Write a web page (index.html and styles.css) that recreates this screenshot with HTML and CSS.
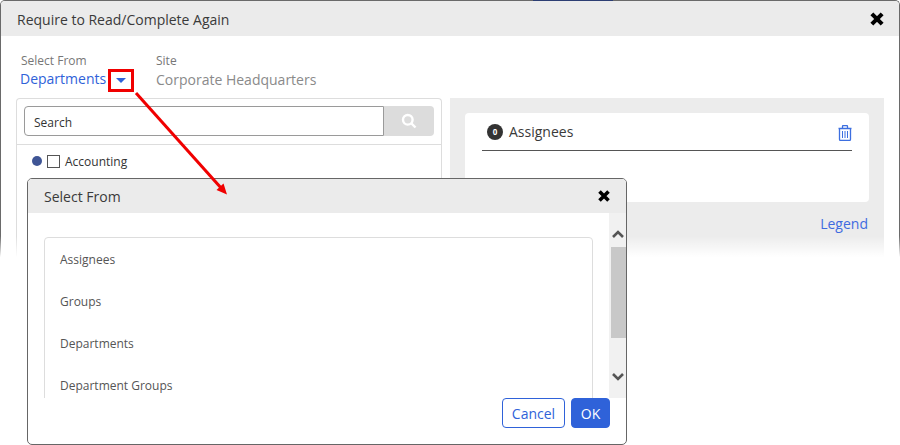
FILE: index.html
```html
<!DOCTYPE html>
<html lang="en">
<head>
<meta charset="utf-8">
<title>Require to Read/Complete Again</title>
<link rel="stylesheet" href="styles.css">
</head>
<body>
<div class="window">
  <div class="sliver"></div>
  <header class="head">
    <span class="title">Require to Read/Complete Again</span>
    <svg class="close" viewBox="0 0 14 14"><path d="M2.5 2.5l9 9M11.5 2.5l-9 9"/></svg>
  </header>
  <div class="filters">
    <div class="filter filter-from">
      <span class="label">Select From</span>
      <span class="value-row"><span class="link">Departments</span><span class="caret"></span></span>
    </div>
    <div class="filter">
      <span class="label">Site</span>
      <span class="value">Corporate Headquarters</span>
    </div>
  </div>
  <div class="panels">
    <section class="left">
      <div class="search">
        <div class="search-input">Search</div>
        <div class="search-btn">
          <svg viewBox="0 0 16 16" class="mag"><circle cx="6.8" cy="6.8" r="4.8"/><path d="M10.5 10.5l4 4"/></svg>
        </div>
      </div>
      <div class="row">
        <span class="dot"></span><span class="check"></span><span class="row-text">Accounting</span>
      </div>
    </section>
    <section class="right">
      <div class="card">
        <div class="card-head">
          <span class="badge">0</span>
          <span class="card-title">Assignees</span>
          <svg class="trash" viewBox="0 0 14 16"><path class="t1" d="M0.5 3.500h13M1.500 4v10.200q0 1.300 1.300 1.300h8.400q1.300 0 1.300-1.300V4M4.500 3V1.500q0-1 1-1h3q1 0 1 1V3"/><path class="t2" d="M4.500 6v7M7 6v7M9.500 6v7"/></svg>
        </div>
      </div>
      <div class="legend">Legend</div>
    </section>
  </div>
  <div class="fade"></div>
</div>

<div class="dialog">
  <header class="dialog-head">
    <span class="dialog-title">Select From</span>
    <svg class="close-small" viewBox="0 0 14 14"><path d="M2.5 2.5l9 9M11.5 2.5l-9 9"/></svg>
  </header>
  <div class="dialog-main">
    <div class="dialog-scroll">
      <ul class="list">
        <li>Assignees</li>
        <li>Groups</li>
        <li>Departments</li>
        <li>Department Groups</li>
      </ul>
    </div>
    <div class="scrollbar">
      <svg class="chev" viewBox="0 0 14 10"><path d="M2 8l5-5 5 5"/></svg>
      <div class="thumb"></div>
      <svg class="chev chev-down" viewBox="0 0 14 10"><path d="M2 2l5 5 5-5"/></svg>
    </div>
  </div>
  <footer class="dialog-foot">
    <button class="btn btn-ghost">Cancel</button>
    <button class="btn btn-solid">OK</button>
  </footer>
</div>

<div class="callout-box"></div>
<svg class="callout-arrow" viewBox="0 0 900 445">
  <path class="shaft" d="M136 93L222 189"/>
  <path class="head-tip" d="M227 194.500L216.500 190L223.500 183.500Z"/>
</svg>
</body>
</html>
```

FILE: styles.css
```css
* { box-sizing: border-box; }
html, body { margin: 0; padding: 0; background: #fff; }
body {
  width: 900px;
  height: 445px;
  position: relative;
  overflow: hidden;
  font-family: "Open Sans", "Liberation Sans", sans-serif;
  color: #333;
}

/* outer window */
.window {
  position: relative;
  height: 260px;
  width: 900px;
  border: 1px solid #6a6a6a;
  border-bottom: 0;
  border-radius: 5px 5px 0 0;
  background: #fff;
}
.sliver {
  position: absolute;
  top: -1px;
  left: 532px;
  width: 80px;
  height: 1px;
  background: #2c3e73;
}
.head {
  height: 35px;
  background: #ebebeb;
  border-radius: 4px 4px 0 0;
  display: flex;
  align-items: center;
  justify-content: space-between;
  padding: 0 14px 0 16px;
}
.title { font-size: 14px; color: #3a3a3a; margin-top: 2px; }
.close { width: 16px; height: 16px; margin-top: 1px; }
.close path, .close-small path {
  fill: none;
  stroke: #000;
  stroke-width: 3.6;
}
.filters {
  display: flex;
  padding: 16px 0 0 20px;
  height: 62px;
}
.filter { display: flex; flex-direction: column; }
.filter-from { width: 135px; }
.label { font-size: 12px; line-height: 17px; color: #777; }
.value-row { display: flex; align-items: center; }
.link { font-size: 14px; line-height: 20px; color: #2f62d9; margin-left: -1px; }
.caret {
  margin: 2px 0 0 10px;
  width: 0;
  height: 0;
  border-left: 5px solid transparent;
  border-right: 5px solid transparent;
  border-top: 5px solid #2f62d9;
}
.value { font-size: 14px; line-height: 20px; color: #8a8a8a; margin-top: 1px; }

.panels {
  display: flex;
  padding-left: 15px;
  gap: 8px;
  height: 162px;
}
.left {
  width: 426px;
  border: 1px solid #ddd;
  border-bottom: 0;
  border-radius: 4px 4px 0 0;
  padding-top: 7px;
}
.search {
  display: flex;
  margin: 0 7px;
  height: 30px;
}
.search-input {
  width: 360px;
  border: 1px solid #9a9a9a;
  border-radius: 4px 0 0 4px;
  font-size: 12px;
  line-height: 26px;
  padding: 2px 0 0 9px;
  color: #333;
}
.search-input { line-height: 28px; }
.search-btn {
  flex: 1;
  background: #dcdcdc;
  border-radius: 0 4px 4px 0;
  display: flex;
  align-items: center;
  justify-content: center;
}
.mag { width: 16px; height: 16px; fill: none; stroke: #fff; stroke-width: 2.4; }
.row {
  margin-top: 8px;
  border-top: 1px solid #ddd;
  display: flex;
  align-items: center;
  padding: 8px 0 0 15px;
}
.dot {
  width: 10px;
  height: 10px;
  border-radius: 50%;
  background: #3f5595;
  margin-top: -2px;
}
.check {
  width: 13px;
  height: 13px;
  border: 1px solid #555;
  margin: -1px 0 0 5px;
}
.row-text { font-size: 12px; margin-left: 5px; color: #333; line-height: 17px; }

.right {
  width: 434px;
  background: #ececec;
  padding: 15px 15px 0;
}
.card {
  height: 89px;
  background: #fff;
  border-radius: 4px;
  padding: 0 17px;
}
.card-head {
  height: 38px;
  border-bottom: 1px solid #555;
  display: flex;
  align-items: center;
  padding: 1px 0 0 5px;
}
.badge {
  width: 16px;
  height: 16px;
  border-radius: 50%;
  background: #333;
  color: #fff;
  font-size: 8px;
  font-weight: 700;
  line-height: 16px;
  text-align: center;
}
.card-title { font-size: 14px; margin-left: 6px; color: #3a3a3a; flex: 1; line-height: 20px; }
.trash { width: 14px; height: 16px; fill: none; margin-top: 2px; }
.t1 { stroke: #3d6fe0; stroke-width: 1.3; }
.t2 { stroke: #3d6fe0; stroke-width: 1; }
.legend {
  margin-top: 12px;
  text-align: right;
  font-size: 14px;
  line-height: 20px;
  color: #3f6be0;
  padding-right: 1px;
}
.fade {
  position: absolute;
  left: -1px;
  right: -1px;
  bottom: 0;
  height: 24px;
  background: linear-gradient(to bottom, rgba(255,255,255,0), #fff 88%);
}

/* nested dialog */
.dialog {
  position: absolute;
  left: 27px;
  top: 178px;
  width: 600px;
  height: 267px;
  background: #fff;
  border: 1px solid #666;
  border-radius: 5px;
  overflow: hidden;
  display: flex;
  flex-direction: column;
}
.dialog-head {
  height: 34px;
  flex: none;
  background: #ebebeb;
  display: flex;
  align-items: center;
  justify-content: space-between;
  padding: 0 15px 0 16px;
}
.dialog-title { font-size: 14px; color: #3a3a3a; }
.close-small { width: 14px; height: 14px; }
.dialog-main { display: flex; height: 185px; flex: none; }
.dialog-scroll { width: 581px; overflow: hidden; padding: 24px 0 0 16px; }
.list {
  list-style: none;
  margin: 0;
  padding: 0 0 20px;
  width: 549px;
  border: 1px solid #ddd;
  border-radius: 4px;
}
.list li {
  height: 42px;
  line-height: 42px;
  padding: 1px 0 0 15px;
  font-size: 12px;
  color: #555;
}
.scrollbar {
  width: 17px;
  background: #f1f1f1;
  display: flex;
  flex-direction: column;
  align-items: flex-end;
  padding-top: 16px;
}
.chev { width: 14px; height: 10px; fill: none; stroke: #555; stroke-width: 2.6; margin-right: 1px; }
.thumb { width: 15px; height: 91px; background: #c8c8c8; margin-top: 8px; }
.chev-down { margin-top: 34px; }
.dialog-foot {
  display: flex;
  justify-content: flex-end;
  gap: 6px;
  padding-right: 16px;
}
.btn {
  height: 30px;
  font-family: inherit;
  font-size: 14px;
  border-radius: 4px;
  border: 1px solid #2f62d9;
  padding: 0;
}
.btn-ghost { width: 63px; background: #fff; color: #2f62d9; }
.btn-solid { width: 39px; background: #2f62d9; color: #fff; }

/* annotation */
.callout-box {
  position: absolute;
  left: 108px;
  top: 69px;
  width: 26px;
  height: 23px;
  border: 3px solid #f00000;
}
.callout-arrow {
  position: absolute;
  left: 0;
  top: 0;
  width: 900px;
  height: 445px;
  pointer-events: none;
}
.shaft { stroke: #f00000; stroke-width: 3; fill: none; }
.head-tip { fill: #f00000; }
```
